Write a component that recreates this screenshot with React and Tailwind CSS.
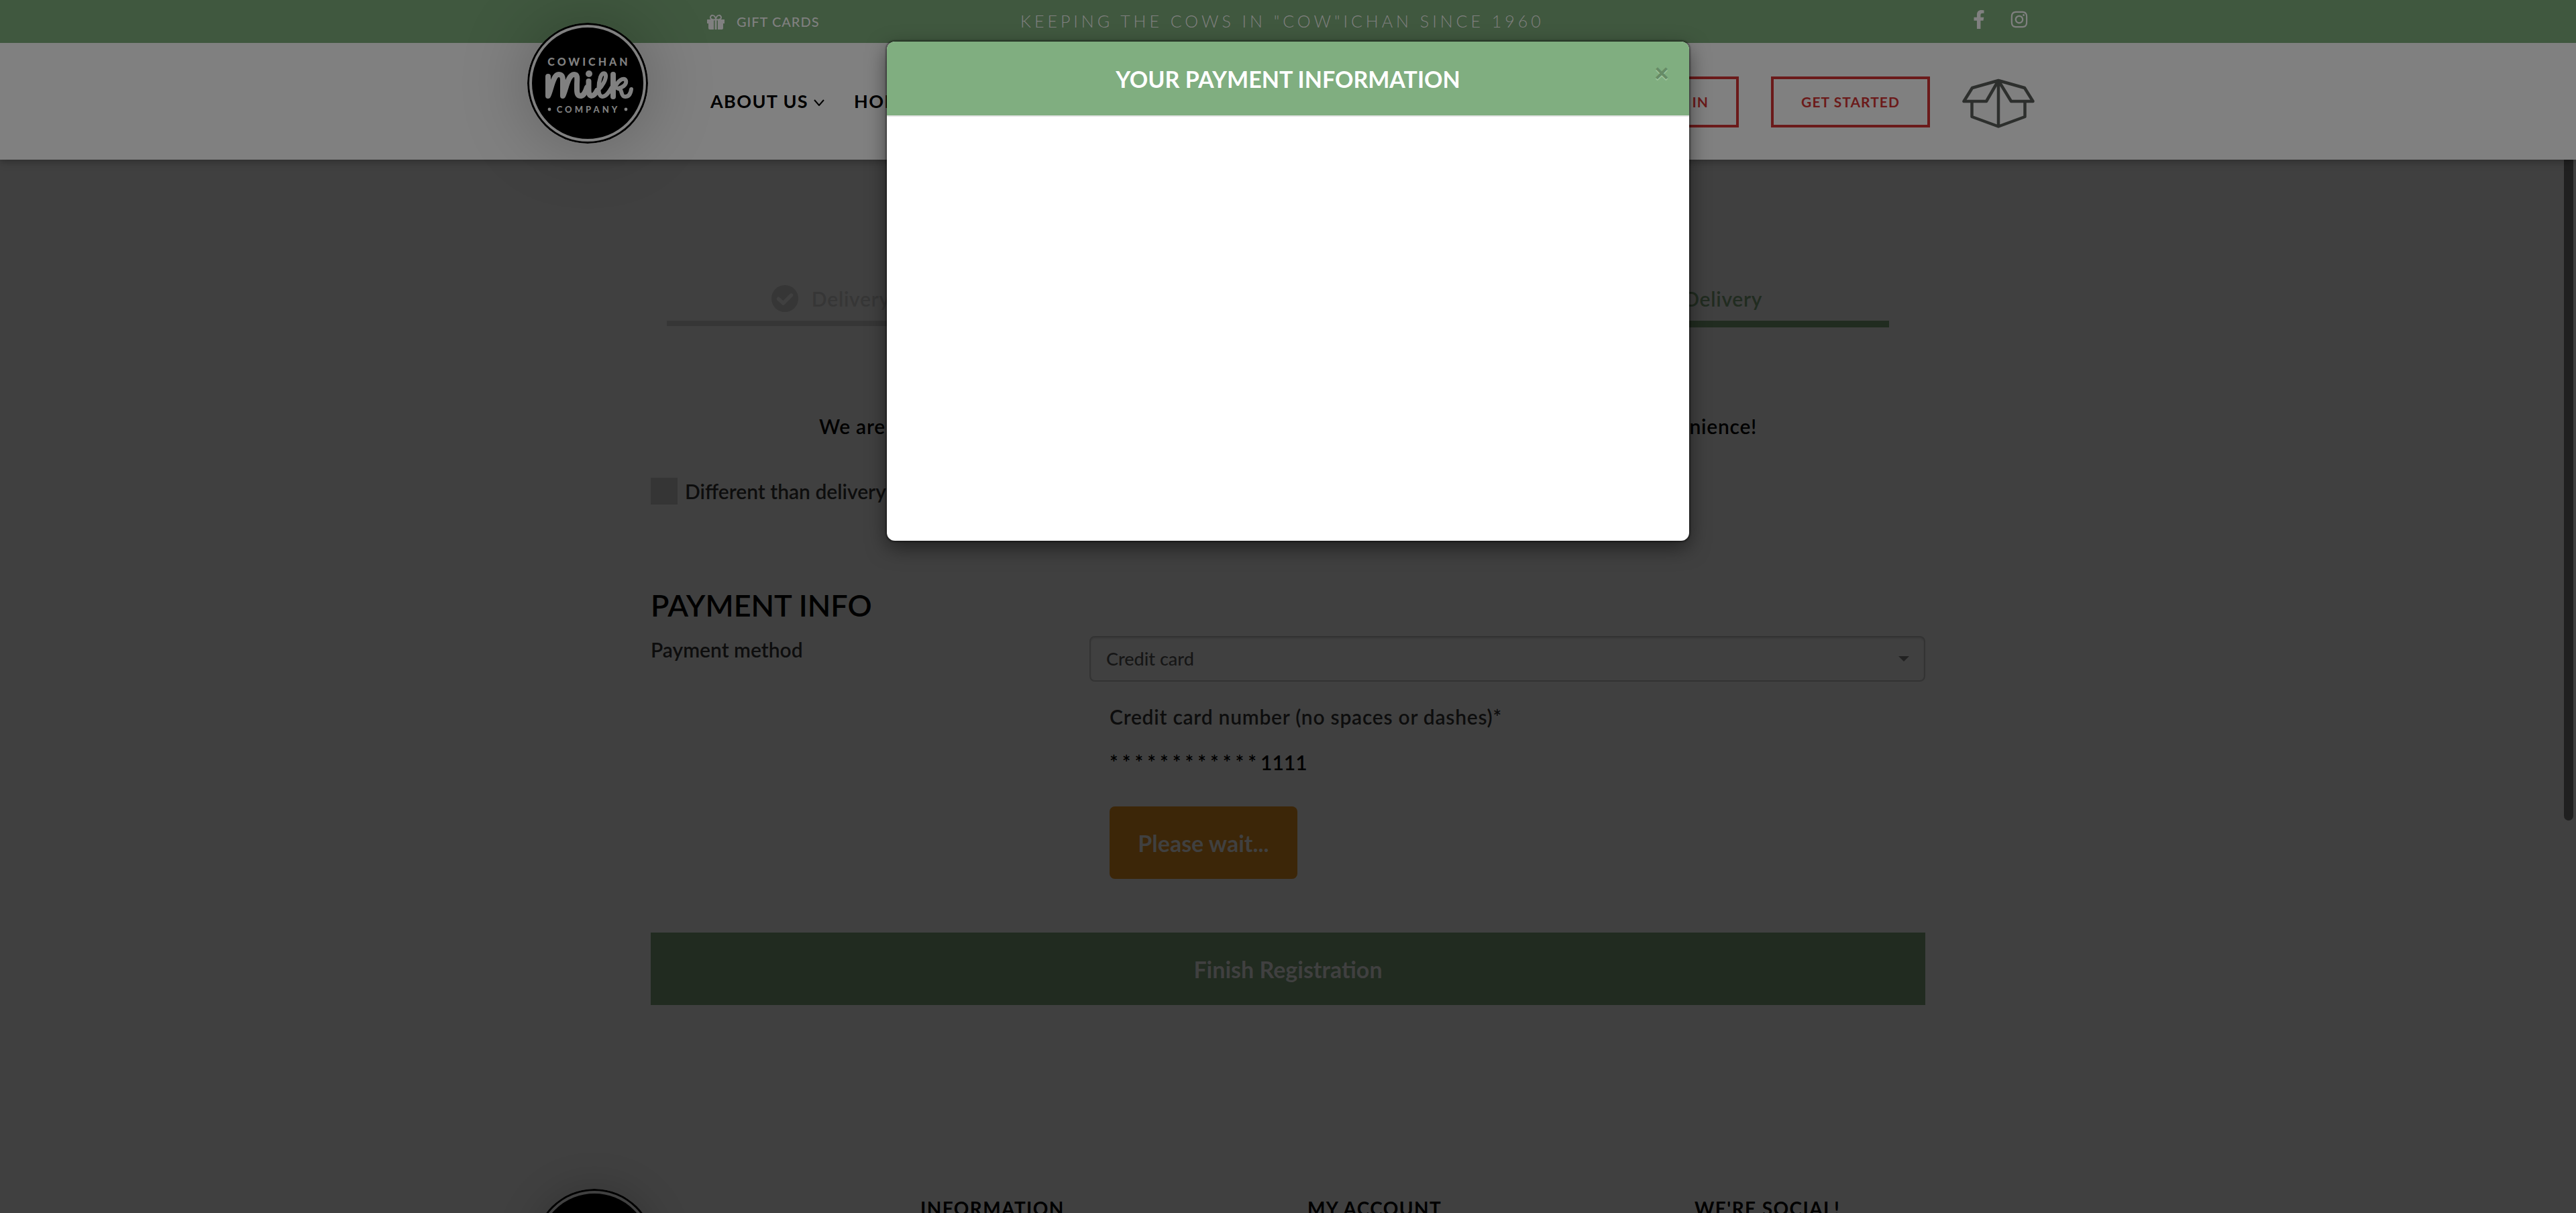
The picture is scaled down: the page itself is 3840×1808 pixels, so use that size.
import React from "react";
import { FaFacebookF, FaInstagram } from "react-icons/fa";

function Logo() {
  return (
    <svg viewBox="0 0 180 180" className="h-[180px] w-[180px] rounded-full" role="img" aria-label="Cowichan Milk Company">
      <circle cx="90" cy="90" r="90" fill="#000" />
      <circle cx="90" cy="90" r="85" fill="none" stroke="currentColor" strokeWidth="4" />
      <g fill="currentColor" fontFamily="Lato, sans-serif" fontWeight="900" textAnchor="middle">
        <text x="92" y="64" fontSize="16" letterSpacing="4">COWICHAN</text>
        <text x="91" y="134" fontSize="13" letterSpacing="4">COMPANY</text>
      </g>
      <circle cx="33" cy="129" r="2.4" fill="currentColor" />
      <circle cx="147" cy="129" r="2.4" fill="currentColor" />
      <g fill="none" stroke="currentColor" strokeLinecap="round" strokeLinejoin="round">
        <path d="M31 80V109C36 100 38 77 47 77C54 77 53 85 53 92V109C58 100 60 77 70 77C76 77 74 85 74 92V100C74 108 77 109 80 109C85 108 87 102 89 96" strokeWidth="8" />
        <path d="M91.500 87V101C91.500 112 99 111 104 101" strokeWidth="8" />
        <path d="M106 100C112 94 118 84 117 78C116 73 111 75 109 81C106 90 104 109 112 110C118 110 122 103 126 96" strokeWidth="6" />
        <path d="M128 77V110" strokeWidth="8" />
        <path d="M129 100C134 86 144 80 147 86C149 93 140 97 135 98C143 98 138 110 146 110C151 110 154 106 155 99" strokeWidth="6" />
      </g>
      <circle cx="92" cy="76" r="5" fill="currentColor" />
    </svg>
  );
}

function GiftIcon() {
  return (
    <svg viewBox="0 0 26 28" className="mb-1 h-7 w-[26px]" fill="currentColor" aria-hidden="true">
      <path d="M0 13H10V28H4Q2 28 2 26V19H0ZM16 13H26V19H24V26Q24 28 22 28H16ZM11.500 13H14.500V28H11.500Z" />
      <path d="M13 13C9 14 5 13 5 10C5 6 11 5 13 12C15 5 21 6 21 10C21 13 17 14 13 13Z" fill="none" stroke="currentColor" strokeWidth="2" />
    </svg>
  );
}

function BoxIcon() {
  return (
    <svg viewBox="0 0 108 74" className="h-[74px] w-[108px]" fill="none" stroke="#2d2f2d" strokeWidth="4.500" strokeLinejoin="round" aria-hidden="true">
      <path d="M54 3L15 14L2.500 34H36L54 3L73 34H105.500L93 14L54 3V71" />
      <path d="M14.500 34V57L54 71.500L93.500 57V34" />
    </svg>
  );
}

function Step({ label, done, active }) {
  return (
    <li
      className={
        active
          ? "flex flex-1 justify-center border-b-[10px] border-[#212c20] text-[#212c20]"
          : "flex flex-1 justify-center border-b-8 border-[#363636] text-[#363636]"
      }
    >
      <span className="flex h-[60px] items-center gap-5 pb-1.5 tracking-wide">
        {done && (
          <svg viewBox="0 0 40 40" className="h-10 w-10" aria-hidden="true">
            <circle cx="20" cy="20" r="20" fill="currentColor" />
            <path d="M10.500 20.500L17.500 27L29.500 15" fill="none" stroke="#404040" strokeWidth="5.500" strokeLinecap="round" strokeLinejoin="round" />
          </svg>
        )}
        {label}
      </span>
    </li>
  );
}

function SiteHeader() {
  return (
    <header className="relative z-10 shadow-[0_2px_12px_rgba(0,0,0,0.35)]">
      <div className="h-16 bg-[#40583f] pr-5 text-[#808080]">
        <div className="mx-auto flex h-full max-w-[2248px] items-center justify-between pr-2.5 pl-[268px]">
          <a href="#gift-cards" className="flex w-[467px] items-center gap-[18px] text-[20px] font-medium tracking-wider">
            <GiftIcon />
            <span>GIFT CARDS</span>
          </a>
          <p className="flex-1 text-[25px] font-light tracking-[5px]">KEEPING THE COWS IN "COW"ICHAN SINCE 1960</p>
          <div className="flex items-center gap-8 pb-1.5">
            <a href="#facebook" aria-label="Facebook"><FaFacebookF className="h-7 w-7" /></a>
            <a href="#instagram" aria-label="Instagram"><FaInstagram className="h-7 w-7" /></a>
          </div>
        </div>
      </div>
      <div className="h-[174px] bg-[#808080] pr-5">
        <div className="mx-auto flex h-full max-w-[2248px] items-center">
          <a href="#home" className="-mt-[54px] rounded-full text-[#808080] shadow-[0_0_100px_rgba(0,0,0,0.25)]"><Logo /></a>
          <nav className="ml-[93px] flex items-center gap-11 text-[27px] font-bold tracking-wider">
            <a href="#about" className="flex items-center gap-2">
              ABOUT US
              <svg viewBox="0 0 16 10" className="mt-1 h-[10px] w-4" fill="none" stroke="currentColor" strokeWidth="2" aria-hidden="true">
                <path d="M1 1L8 9L15 1" />
              </svg>
            </a>
            <a href="#home-delivery">HOME DELIVERY</a>
          </nav>
          <div className="ml-auto flex items-center gap-12 pt-0.5 pr-px text-[21px] font-bold tracking-wider text-[#6b1a1a]">
            <a href="#login" className="flex h-[76px] items-center border-4 border-[#6b1a1a] px-[41px]">LOG IN</a>
            <a href="#start" className="flex h-[76px] items-center border-4 border-[#6b1a1a] px-[41px]">GET STARTED</a>
            <a href="#box" aria-label="Your box" className="pt-1"><BoxIcon /></a>
          </div>
        </div>
      </div>
    </header>
  );
}

function PaymentModal() {
  return (
    <div className="absolute inset-x-0 top-[62px] z-20 flex justify-center">
      <section role="dialog" aria-labelledby="modal-title" className="w-[1196px] overflow-hidden rounded-xl bg-white shadow-[0_10px_30px_rgba(0,0,0,0.5),0_0_2px_2px_rgba(0,0,0,0.35)]">
        <div className="relative flex h-28 items-center justify-center border-b-2 border-[#e5e5e5] bg-[#80ae80]">
          <h2 id="modal-title" className="text-[34px] font-bold text-white">YOUR PAYMENT INFORMATION</h2>
          <button type="button" aria-label="Close" className="absolute top-[22px] right-[30px] text-[38px] leading-[46px] font-black text-[#668b66] [text-shadow:0_2px_0_#9fc59f]">×</button>
        </div>
        <div className="h-[632px]" />
      </section>
    </div>
  );
}

export default function App() {
  return (
    <div className="relative h-screen overflow-hidden bg-[#404040] font-[Lato,sans-serif] text-black">
      <SiteHeader />
      <main className="mx-auto max-w-[1900px] pt-[180px] text-[30px] font-semibold text-[#0d0d0d]">
        <ol className="mr-[54px] ml-6 flex items-start">
          <Step label="Delivery Address" done />
          <Step label="Account Info" done />
          <Step label="Choose Delivery" active />
        </ol>
        <p className="mt-[127px] text-center leading-10 tracking-wide text-black">
          We are updating our payment system. Please re-enter your card details. Sorry for any inconvenience!
        </p>
        <label className="mt-[57px] flex items-center gap-[11px] leading-10">
          <input type="checkbox" className="h-10 w-10 appearance-none bg-[#353535]" />
          Different than delivery address
        </label>
        <h1 className="mt-[120px] text-[45px] leading-[60px] text-black">PAYMENT INFO</h1>
        <div className="mt-4 flex justify-between">
          <label htmlFor="method" className="leading-10">Payment method</label>
          <div className="w-[1246px]">
            <div className="relative">
              <select id="method" className="h-[68px] w-full appearance-none rounded-lg border-2 border-[#333] bg-transparent px-[23px] text-[27px] font-medium text-[#161616] shadow-[inset_0_2px_2px_rgba(0,0,0,0.1)]">
                <option>Credit card</option>
              </select>
              <svg viewBox="0 0 16 8" className="pointer-events-none absolute top-[30px] right-6 h-2 w-4" fill="#222" aria-hidden="true">
                <path d="M0 0H16L8 8Z" />
              </svg>
            </div>
            <div className="pl-[30px]">
              <p className="mt-8 leading-10 tracking-wide">Credit card number (no spaces or dashes)*</p>
              <p className="mt-7 leading-10 text-black"><span className="tracking-[6px]">************</span>1111</p>
              <button type="button" className="mt-[46px] h-[108px] w-[280px] rounded-lg bg-[#3c2608] text-[34px] font-bold text-[#404040]">Please wait...</button>
            </div>
          </div>
        </div>
        <button type="button" className="mt-20 h-[108px] w-full bg-[#212b20] text-[34px] font-bold text-[#404040]">Finish Registration</button>
      </main>
      <footer className="mx-auto mt-[274px] flex max-w-[2248px] items-start text-[28px] font-bold tracking-wider">
        <a href="#top" className="rounded-full text-[#404040] shadow-[0_0_60px_rgba(0,0,0,0.2)]"><Logo /></a>
        <div className="mt-2 ml-[396px] grid flex-1 grid-cols-[577px_577px_1fr]">
          <h3>INFORMATION</h3>
          <h3>MY ACCOUNT</h3>
          <h3>WE'RE SOCIAL!</h3>
        </div>
      </footer>
      <div className="absolute top-[200px] right-1 h-[1023px] w-[14px] rounded-full bg-[#202020]" />
      <PaymentModal />
    </div>
  );
}
